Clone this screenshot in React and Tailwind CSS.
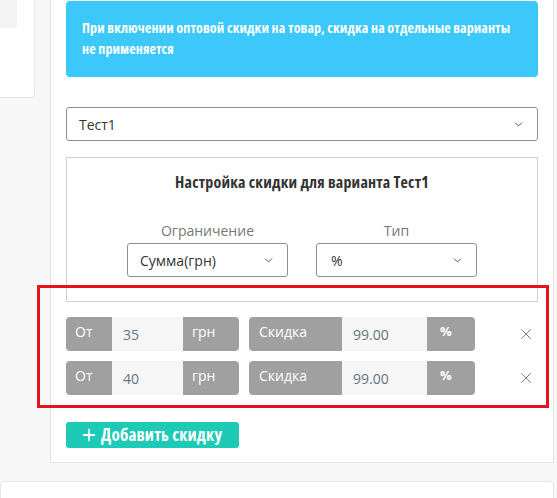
import React from 'react';
import { X, Plus } from 'lucide-react';

const Chevron = () => (
    <svg width="9" height="6" viewBox="0 0 9 6" fill="none" className="shrink-0">
        <path d="M1 1.5l3.5 3.5 3.5-3.5" stroke="#555" strokeWidth="1" />
    </svg>
);

const Select = ({ value, className = '' }) => (
    <div className={`flex items-center justify-between h-[34px] border border-[#8f8f8f] rounded-[3px] bg-white text-[14px] text-[#333] ${className}`}>
        <span>{value}</span>
        <Chevron />
    </div>
);

const RangeRow = ({ from, discount }) => (
    <div className="flex items-center h-[34px]">
        <div className="flex h-full w-[173px] rounded-[4px] overflow-hidden">
            <span className="w-[46px] bg-[#a0a0a0] text-white pl-[9px] pb-[5px] flex items-center">От</span>
            <span className="w-[71px] bg-[#f6f6f6] text-[#66737f] pl-[11px] pt-[1px] flex items-center">{from}</span>
            <span className="flex-1 bg-[#a0a0a0] text-white pl-[9px] pb-[5px] flex items-center">грн</span>
        </div>
        <div className="flex h-full w-[226px] ml-[10px] rounded-[4px] overflow-hidden">
            <span className="w-[93px] bg-[#a0a0a0] text-white pl-[10px] pb-[5px] flex items-center">Скидка</span>
            <span className="w-[85px] bg-[#f6f6f6] text-[#66737f] pl-[11px] pt-[1px] flex items-center">{discount}</span>
            <span className="flex-1 bg-[#a0a0a0] text-white pl-[13px] pb-[5px] flex items-center font-bold text-[13px]">%</span>
        </div>
        <X size={18} strokeWidth={1.1} className="ml-[42px] text-[#666]" />
    </div>
);

const App = () => {
    return (
        <div className="relative w-[557px] h-[498px] overflow-hidden bg-[#f7f7f7] font-['Open_Sans',sans-serif] text-[14px]">
            <div className="flex">
                <div className="w-[50px] shrink-0">
                    <div className="w-[35px] h-[98px] bg-white border-r border-b border-[#e6e6e6] rounded-br-[4px]">
                        <div className="w-[17px] h-[28px] bg-[#f3f3f3] rounded-br-[4px]" />
                    </div>
                </div>

                <div className="w-[504px] bg-white border-x border-b border-[#e3e3e3] pl-[15px] pr-[15px] pt-px pb-[14px]">
                    <div className="bg-[#3cc8fa] rounded-[4px] pl-4 pr-3 pt-4 pb-[18px] text-white font-bold text-[14px] tracking-[0.1px] leading-[21px] font-stretch-condensed">
                        При включении оптовой скидки на товар, скидка на отдельные варианты не применяется
                    </div>

                    <Select value="Тест1" className="mt-[30px] pl-3 pr-[14px]" />

                    <div className="mt-4 border border-[#d0d0d0] pt-[14px] pb-[24px]">
                        <h3 className="text-center font-bold text-[16px] tracking-[0.2px] leading-[20px] text-[#333] font-stretch-condensed">
                            Настройка скидки для варианта Тест1
                        </h3>
                        <div className="flex justify-center gap-[28px] mt-[29px]">
                            <div className="w-[161px]">
                                <div className="text-center text-[#777] leading-[20px] mb-[2px]">Ограничение</div>
                                <Select value="Сумма(грн)" className="pl-3 pr-[14px]" />
                            </div>
                            <div className="w-[161px]">
                                <div className="text-center text-[#777] leading-[20px] mb-[2px]">Тип</div>
                                <Select value="%" className="pl-[14px] pr-[14px]" />
                            </div>
                        </div>
                    </div>

                    <div className="mt-[15px] flex flex-col gap-[10px]">
                        <RangeRow from="35" discount="99.00" />
                        <RangeRow from="40" discount="99.00" />
                    </div>

                    <button className="mt-[27px] h-[26px] w-[173px] bg-[#1ccab5] rounded-[3px] text-white font-bold text-[17px] tracking-[0.2px] flex items-center pl-[14px] gap-[3px] font-stretch-condensed">
                        <Plus size={18} strokeWidth={2.5} />
                        Добавить скидку
                    </button>
                </div>
            </div>

            <div className="mt-[18px] w-[554px] h-[40px] bg-white border border-[#e6e6e6] rounded-[4px]" />

            <div className="absolute left-[37px] top-[285px] w-[512px] h-[123px] border-[3px] border-[#e3141b] pointer-events-none" />
        </div>
    );
};

export default App;
